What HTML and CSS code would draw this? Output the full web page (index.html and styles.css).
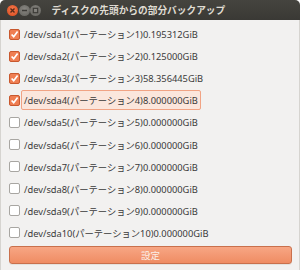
FILE: index.html
```html
<!DOCTYPE html>
<html lang="ja">
<head>
    <meta charset="UTF-8">
    <title>ディスクの先頭からの部分バックアップ</title>
    <link rel="stylesheet" href="styles.css">
</head>
<body>
    <div class="window">
        <!-- タイトルバー -->
        <div class="titlebar">
            <div class="controls">
                <span class="ctl close"><svg width="11" height="11" viewBox="0 0 11 11"><path d="M3.5 3.5L7.5 7.5M7.5 3.5L3.5 7.5" stroke="#5a2a18" stroke-width="1.4"/></svg></span>
                <span class="ctl"><svg width="11" height="11" viewBox="0 0 11 11"><path d="M3 5.5H8" stroke="#3c3b37" stroke-width="1.4"/></svg></span>
                <span class="ctl"><svg width="11" height="11" viewBox="0 0 11 11"><rect x="3.3" y="3.3" width="4.4" height="4.4" fill="none" stroke="#3c3b37" stroke-width="1.2"/></svg></span>
            </div>
            <div class="title">ディスクの先頭からの部分バックアップ</div>
        </div>

        <div class="content">
            <div class="list">
                <label class="row"><span class="check on"></span><span class="text">/dev/sda1(パーテーション1)0.195312GiB</span></label>
                <label class="row"><span class="check on"></span><span class="text">/dev/sda2(パーテーション2)0.125000GiB</span></label>
                <label class="row"><span class="check on"></span><span class="text">/dev/sda3(パーテーション3)58.356445GiB</span></label>
                <label class="row"><span class="check on"></span><span class="text focus">/dev/sda4(パーテーション4)8.000000GiB</span></label>
                <label class="row"><span class="check"></span><span class="text">/dev/sda5(パーテーション5)0.000000GiB</span></label>
                <label class="row"><span class="check"></span><span class="text">/dev/sda6(パーテーション6)0.000000GiB</span></label>
                <label class="row"><span class="check"></span><span class="text">/dev/sda7(パーテーション7)0.000000GiB</span></label>
                <label class="row"><span class="check"></span><span class="text">/dev/sda8(パーテーション8)0.000000GiB</span></label>
                <label class="row"><span class="check"></span><span class="text">/dev/sda9(パーテーション9)0.000000GiB</span></label>
                <label class="row"><span class="check"></span><span class="text">/dev/sda10(パーテーション10)0.000000GiB</span></label>
            </div>
            <button class="apply">設定</button>
        </div>
    </div>
</body>
</html>
```

FILE: styles.css
```css
/* ウィンドウ全体 */
body {
    margin: 0;
    background: #ffffff;
    font-family: "Noto Sans", "Noto Sans CJK JP", sans-serif;
}

.window {
    width: 300px;
    height: 270px;
    display: flex;
    flex-direction: column;
    background: #f2f1f0;
    border-radius: 5px 5px 0 0;
    overflow: hidden;
}

.titlebar {
    height: 20px;
    background: linear-gradient(#45443f, #3a3935);
    display: flex;
    align-items: center;
    padding-left: 7px;
    flex-shrink: 0;
}

.controls {
    display: flex;
    gap: 0;
}

.ctl {
    width: 11px;
    height: 11px;
    margin-right: 0.5px;
    border-radius: 50%;
    background: radial-gradient(circle at 50% 40%, #8a8883, #605f5a);
    display: flex;
}

.ctl.close {
    background: radial-gradient(circle at 50% 40%, #f57a4e, #d8491c);
}

.title {
    margin-left: 10px;
    color: #dfdbd2;
    font-size: 9.7px;
    font-weight: bold;
}

.content {
    flex: 1;
    display: flex;
    flex-direction: column;
    padding: 3px 7px 6px 8px;
    border-left: 1px solid #d6d4d0;
    border-right: 1px solid #d6d4d0;
}

.list {
    flex: 1;
    display: flex;
    flex-direction: column;
}

.row {
    flex: 1;
    display: flex;
    align-items: center;
    font-size: 9.3px;
    color: #3a3a3a;
}

.check {
    width: 9px;
    height: 9px;
    border: 1px solid #a8a6a2;
    border-radius: 2px;
    background: #ffffff;
    flex-shrink: 0;
}

.check.on {
    border-color: #c8582e;
    background: #ef7e52 url("data:image/svg+xml,%3Csvg xmlns='http://www.w3.org/2000/svg' width='9' height='9'%3E%3Cpath d='M1.6 4.5L3.7 6.7L7.6 1.6' fill='none' stroke='%23ffffff' stroke-width='1.7'/%3E%3C/svg%3E") center no-repeat;
}

.text {
    margin-left: 1px;
    padding: 2px 2px;
    border: 1px solid transparent;
}

.text.focus {
    border-color: #f1a384;
    background: #fbe6dc;
    border-radius: 2px;
}

.apply {
    height: 18px;
    margin-top: 2px;
    border: 1px solid #c9704c;
    border-radius: 3px;
    background: linear-gradient(#f7a684, #ef8c63);
    color: #fbeee7;
    font-family: "Noto Sans CJK JP", sans-serif;
    font-size: 9.5px;
    padding: 0;
    box-shadow: 0 1px 0 #e4e2de;
}
```
